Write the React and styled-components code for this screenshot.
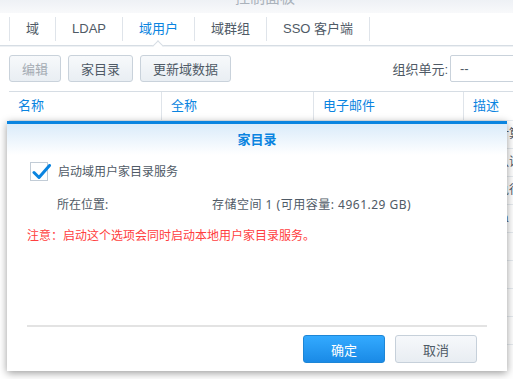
import React from 'react';
import styled, { createGlobalStyle } from 'styled-components';

const GlobalStyle = createGlobalStyle`
  html, body {
    margin: 0;
    padding: 0;
    background: #ffffff;
    overflow: hidden;
  }
  body {
    font-family: "Liberation Sans", "Noto Sans CJK SC", sans-serif;
    color: #505a64;
  }
`;

const Screen = styled.div`
  position: relative;
  width: 513px;
  height: 379px;
  overflow: hidden;
  background: #fff;
`;

const Window = styled.div`
  width: 560px;
  display: flex;
  flex-direction: column;
`;

const TitleBar = styled.div`
  height: 13px;
  background: linear-gradient(#eef1f5, #f8f9fb);
  display: flex;
  justify-content: center;
  overflow: hidden;
`;

const TitleText = styled.span`
  margin-top: -11px;
  margin-left: -30px;
  font-size: 15px;
  color: #aab2bb;
  line-height: 18px;
`;

const TabBar = styled.div`
  height: 32px;
  display: flex;
  align-items: center;
  padding-left: 9px;
  border-bottom: 1px solid #d6dde4;
  box-shadow: 0 1px 0 #eef1f4;
`;

const Tab = styled.div`
  position: relative;
  height: 24px;
  line-height: 24px;
  padding: 0 16px;
  font-size: 13px;
  color: ${p => (p.$active ? '#0a84e0' : '#4f5a66')};
  border-left: 1px solid #dfe4ea;
  &:last-child {
    border-right: 1px solid #dfe4ea;
  }
  ${p =>
    p.$active &&
    `
    &::after {
      content: '';
      position: absolute;
      left: 50%;
      bottom: -9px;
      width: 7px;
      height: 7px;
      margin-left: -4px;
      background: #fff;
      border-left: 1px solid #d6dde4;
      border-top: 1px solid #d6dde4;
      transform: rotate(45deg);
    }
  `}
`;

const Toolbar = styled.div`
  display: flex;
  align-items: center;
  gap: 7px;
  padding: 9px 0 9px 9px;
`;

const ToolButton = styled.button`
  height: 27px;
  padding: 0 12px;
  font-family: inherit;
  font-size: 13px;
  color: ${p => (p.disabled ? '#a4abb3' : '#4f5a66')};
  background: linear-gradient(#f7f9fb, #e9eef3);
  border: 1px solid #c9d2db;
  border-radius: 3px;
`;

const OuGroup = styled.div`
  margin-left: auto;
  display: flex;
  align-items: center;
  gap: 2px;
  font-size: 13px;
  color: #4f5a66;
`;

const OuInput = styled.div`
  width: 110px;
  height: 27px;
  box-sizing: border-box;
  border: 1px solid #c9d2db;
  border-radius: 2px;
  padding-left: 9px;
  line-height: 25px;
  font-size: 13px;
  color: #4f5a66;
`;

const Table = styled.div`
  margin-left: 9px;
  border-top: 1px solid #d6dde4;
`;

const Row = styled.div`
  display: grid;
  grid-template-columns: 152px 152px 150px 1fr;
  height: ${p => (p.$head ? '28px' : '27px')};
  border-bottom: 1px solid #e6ebf0;
`;

const Cell = styled.div`
  padding-left: 9px;
  line-height: ${p => (p.$head ? '28px' : '27px')};
  white-space: nowrap;
  overflow: hidden;
  color: ${p => (p.$head ? '#0a84e0' : '#4f5a66')};
  font-size: ${p => (p.$head ? '13px' : '12px')};
  &:not(:first-child) {
    border-left: 1px solid ${p => (p.$head ? '#dfe4ea' : 'transparent')};
  }
`;

const Modal = styled.div`
  position: absolute;
  left: 7px;
  top: 121px;
  width: 500px;
  height: 250px;
  background: #fff;
  border-top: 3px solid #0a84e0;
  box-sizing: border-box;
  box-shadow: 0 2px 8px rgba(0, 0, 0, 0.4);
  display: flex;
  flex-direction: column;
  font-family: "Noto Sans", "Noto Sans CJK SC", sans-serif;
`;

const ModalHeader = styled.div`
  height: 31px;
  line-height: 30px;
  text-align: center;
  font-size: 13px;
  font-weight: bold;
  color: #0a84e0;
  background: linear-gradient(#daebfa, #ffffff);
`;

const ModalBody = styled.div`
  flex: 1;
  padding: 6px 20px 0;
  display: flex;
  flex-direction: column;
`;

const CheckRow = styled.label`
  display: flex;
  align-items: center;
  gap: 10px;
  padding-left: 3px;
  height: 20px;
  font-size: 12px;
  color: #4f5a66;
`;

const CheckBox = styled.span`
  position: relative;
  width: 16px;
  height: 17px;
  border: 1px solid #c2ccd6;
  background: #fff;
  svg {
    position: absolute;
    left: 1px;
    top: 1px;
  }
`;

const InfoRow = styled.div`
  display: grid;
  grid-template-columns: 155px 1fr;
  padding-left: 30px;
  margin-top: 14px;
  font-size: 12px;
  line-height: 20px;
  color: #4f5a66;
`;

const InfoValue = styled.span`
  letter-spacing: 0.5px;
`;

const Note = styled.div`
  margin-top: 11px;
  font-size: 12px;
  line-height: 20px;
  color: #ff4040;
`;

const Divider = styled.div`
  margin: auto 20px 0;
  height: 2px;
  background: #e3e3e3;
`;

const Footer = styled.div`
  display: flex;
  justify-content: flex-end;
  gap: 10px;
  padding: 8px 30px 8px 0;
`;

const DialogButton = styled.button`
  width: 82px;
  height: 28px;
  font-family: "Liberation Sans", "Noto Sans CJK SC", sans-serif;
  font-size: 13px;
  border-radius: 3px;
  color: ${p => (p.$primary ? '#fff' : '#4f5a66')};
  background: ${p =>
    p.$primary
      ? 'linear-gradient(#33aaff, #1a8ae6)'
      : 'linear-gradient(#f6f8fb, #e8edf2)'};
  border: 1px solid ${p => (p.$primary ? '#1d86d6' : '#c6d0da')};
`;

const rows = [
  ['Administrator', 'Administrator', '', '用于计算机账户'],
  ['Guest', 'Guest', '', '内置认证账户'],
  ['krbtgt', 'krbtgt', '', '用于执行任务'],
  ['admin', 'admin', '', 'KDC a'],
  ['', '', '', ''],
  ['', '', '', ''],
  ['', '', '', ''],
  ['', '', '', ''],
];

export default function App() {
  return (
    <>
      <GlobalStyle />
      <Screen>
        <Window>
          <TitleBar>
            <TitleText>控制面板</TitleText>
          </TitleBar>
          <TabBar>
            <Tab>域</Tab>
            <Tab>LDAP</Tab>
            <Tab $active>域用户</Tab>
            <Tab>域群组</Tab>
            <Tab>SSO 客户端</Tab>
          </TabBar>
          <Toolbar>
            <ToolButton disabled>编辑</ToolButton>
            <ToolButton>家目录</ToolButton>
            <ToolButton>更新域数据</ToolButton>
            <OuGroup>
              组织单元:
              <OuInput>--</OuInput>
            </OuGroup>
          </Toolbar>
          <Table>
            <Row $head>
              <Cell $head>名称</Cell>
              <Cell $head>全称</Cell>
              <Cell $head>电子邮件</Cell>
              <Cell $head>描述</Cell>
            </Row>
            {rows.map((r, i) => (
              <Row key={i}>
                {r.map((c, j) => (
                  <Cell key={j}>{c}</Cell>
                ))}
              </Row>
            ))}
          </Table>
        </Window>

        <Modal>
          <ModalHeader>家目录</ModalHeader>
          <ModalBody>
            <CheckRow>
              <CheckBox>
                <svg width="20" height="16" viewBox="0 0 20 16">
                  <path
                    d="M2 8.5 L7 13.5 L17.5 1.5"
                    fill="none"
                    stroke="#0a84e0"
                    strokeWidth="3"
                    strokeLinecap="round"
                    strokeLinejoin="round"
                  />
                </svg>
              </CheckBox>
              启动域用户家目录服务
            </CheckRow>
            <InfoRow>
              <span>所在位置:</span>
              <InfoValue>存储空间 1 (可用容量: 4961.29 GB)</InfoValue>
            </InfoRow>
            <Note>注意：启动这个选项会同时启动本地用户家目录服务。</Note>
          </ModalBody>
          <Divider />
          <Footer>
            <DialogButton $primary>确定</DialogButton>
            <DialogButton>取消</DialogButton>
          </Footer>
        </Modal>
      </Screen>
    </>
  );
}
